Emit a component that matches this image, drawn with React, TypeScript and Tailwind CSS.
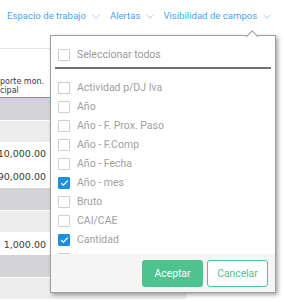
import React from "react";

const Chevron = () => (
  <svg width="8" height="5" viewBox="0 0 8 5" className="shrink-0">
    <polyline points="0.5,0.8 4,4.2 7.5,0.8" fill="none" stroke="#a6cdf2" strokeWidth="1" />
  </svg>
);

const Box = ({ checked }: { checked?: boolean }) =>
  checked ? (
    <div className="w-[12px] h-[12px] shrink-0 rounded-[1px] bg-[#1e8fdc] border border-[#1e8fdc] flex items-center justify-center">
      <svg width="9" height="8" viewBox="0 0 9 8">
        <polyline points="1.2,4.2 3.4,6.2 7.8,1.6" fill="none" stroke="#ffffff" strokeWidth="1.3" />
      </svg>
    </div>
  ) : (
    <div className="w-[12px] h-[12px] shrink-0 rounded-[1px] bg-white border border-[#cfcfcf]" />
  );

const items: { label: string; checked?: boolean }[] = [
  { label: "Actividad p/DJ Iva" },
  { label: "Año" },
  { label: "Año - F. Prox. Paso" },
  { label: "Año - F.Comp" },
  { label: "Año - Fecha" },
  { label: "Año - mes", checked: true },
  { label: "Bruto" },
  { label: "CAI/CAE" },
  { label: "Cantidad", checked: true },
  { label: "Categoría" },
];

const num = "font-['DejaVu_Sans',sans-serif] text-[9.5px] text-[#3a3a3a]";

export default function App() {
  return (
    <div className="relative w-[284px] h-[302px] overflow-hidden bg-white font-['Roboto',sans-serif]">
      {/* nav */}
      <div className="h-[35px] flex items-start pt-[10px] pl-[7px] text-[9.6px] leading-[12px] text-[#4aa4ee]">
        <div className="flex items-center gap-[6px]">
          <span>Espacio de trabajo</span>
          <Chevron />
        </div>
        <div className="flex items-center gap-[6px] ml-[10px]">
          <span>Alertas</span>
          <Chevron />
        </div>
        <div className="flex items-center gap-[6px] ml-[9px]">
          <span>Visibilidad de campos</span>
          <Chevron />
        </div>
      </div>

      {/* table behind */}
      <div className="w-[187px]">
        <div className="h-[14px] border-b border-[#e4e4e4]" />
        <div className="h-[24px]" />
        <div className="h-[25px] border-b border-[#2bb5ec] flex flex-col justify-center font-['DejaVu_Sans',sans-serif] text-[8px] leading-[9px] text-[#3a3a3a] pt-[2px]">
          <span className="block">porte mon.</span>
          <span className="block">cipal</span>
        </div>
        {/* group 1 */}
        <div className="h-[23px] bg-[#d4d4d7] border-b border-white" />
        <div className="h-[21px] bg-[#ececec]" />
        <div className="h-[23px] flex items-end justify-end pr-[4px] pb-[4px] w-[50px] overflow-hidden whitespace-nowrap">
          <span className={num}>10,000.00</span>
        </div>
        <div className="h-[23px] flex items-end justify-end pr-[4px] pb-[4px] w-[50px] overflow-hidden whitespace-nowrap">
          <span className={num}>90,000.00</span>
        </div>
        {/* group 2 */}
        <div className="h-[23px] bg-[#d4d4d7] border-b border-white" />
        <div className="h-[21px] bg-[#ececec]" />
        <div className="h-[23px] flex items-end justify-end pr-[4px] pb-[3px] w-[50px] overflow-hidden whitespace-nowrap">
          <span className={num}>1,000.00</span>
        </div>
        {/* group 3 */}
        <div className="h-[23px] bg-[#d4d4d7] border-b border-white" />
        <div className="h-[21px] bg-[#ececec]" />
      </div>

      {/* popup */}
      <div className="absolute left-[50px] top-[35px] w-[226px] h-[258px] bg-white border border-[#9e9e9e] shadow-[2px_2px_4px_rgba(0,0,0,0.35)] flex flex-col">
        <div className="absolute left-[196.75px] top-[-4.25px] w-[8.5px] h-[8.5px] bg-white border-t border-l border-[#9e9e9e] rotate-45" />
        <div className="pt-[13px] px-[7px] flex items-center gap-[7px] h-[12px] box-content">
          <Box />
          <span className="text-[10.5px] leading-[12px] text-[#9a9a9a]">Seleccionar todos</span>
        </div>
        <div className="mx-[4px] mt-[6px] h-[2px] bg-[#707070]" />
        <div className="h-[185px] pt-[9px] overflow-hidden">
          {items.map((it) => (
            <div key={it.label} className="h-[19px] flex items-center gap-[7px] px-[7px]">
              <Box checked={it.checked} />
              <span className="text-[10.5px] leading-[12px] text-[#a0a0a0] whitespace-nowrap">{it.label}</span>
            </div>
          ))}
        </div>
        <div className="h-[38px] bg-[#f5f5f5] flex justify-end items-start pt-[6px] pr-[7px] gap-[4px]">
          <button className="w-[61px] h-[27px] rounded-[3px] bg-[#4dc490] text-white text-[10.3px] flex items-center justify-center">
            Aceptar
          </button>
          <button className="w-[61px] h-[27px] rounded-[3px] bg-white border border-[#4dc490] text-[#4dc490] text-[10.3px] flex items-center justify-center">
            Cancelar
          </button>
        </div>
      </div>
    </div>
  );
}
